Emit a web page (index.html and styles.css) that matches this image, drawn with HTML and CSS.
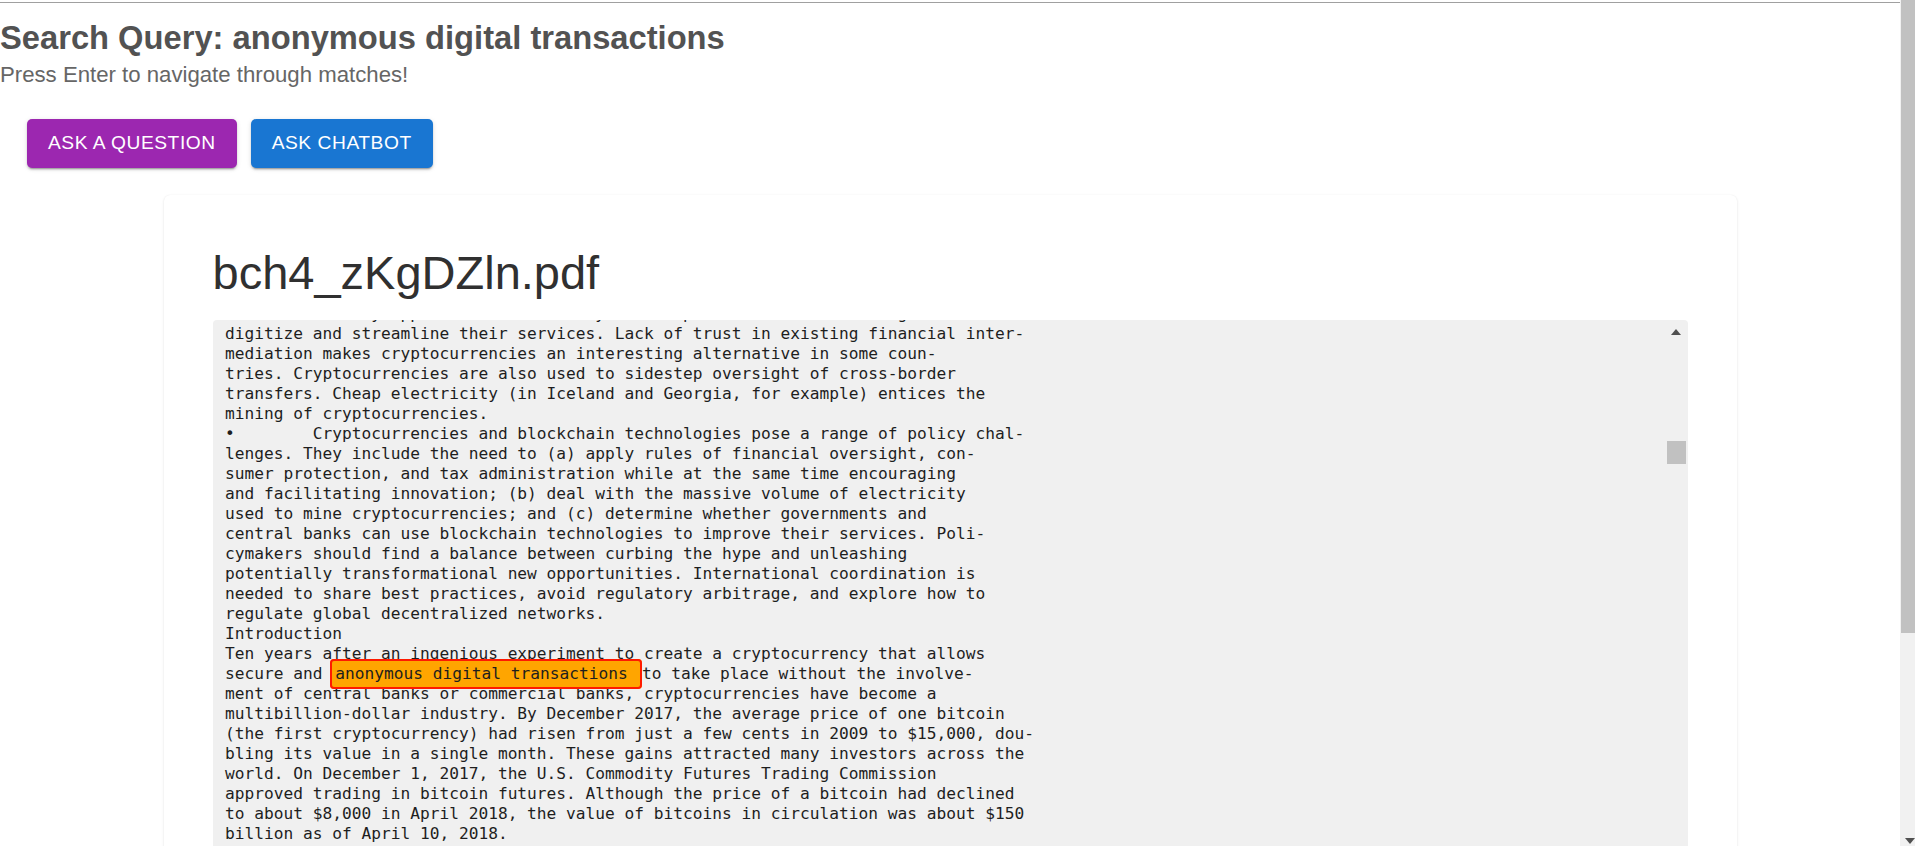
FILE: index.html
```html
<!DOCTYPE html>
<html lang="en">
<head>
<meta charset="utf-8">
<title>Search Query: anonymous digital transactions</title>
<link rel="stylesheet" href="styles.css">
</head>
<body>
<div class="page">
  <div class="topline"></div>
  <header class="query">
    <h1 class="query-title">Search Query: anonymous digital transactions</h1>
    <p class="query-hint">Press Enter to navigate through matches!</p>
  </header>
  <div class="actions">
    <button class="btn btn-secondary" type="button">Ask a question</button>
    <button class="btn btn-primary" type="button">Ask chatbot</button>
  </div>
  <section class="card">
    <h2 class="doc-title">bch4_zKgDZln.pdf</h2>
    <div class="viewer">
      <div class="viewer-body"><pre class="doc">As a result they approach this in a way that improves chances of using it to
digitize and streamline their services. Lack of trust in existing financial inter-
mediation makes cryptocurrencies an interesting alternative in some coun-
tries. Cryptocurrencies are also used to sidestep oversight of cross-border
transfers. Cheap electricity (in Iceland and Georgia, for example) entices the
mining of cryptocurrencies.
•        Cryptocurrencies and blockchain technologies pose a range of policy chal-
lenges. They include the need to (a) apply rules of financial oversight, con-
sumer protection, and tax administration while at the same time encouraging
and facilitating innovation; (b) deal with the massive volume of electricity
used to mine cryptocurrencies; and (c) determine whether governments and
central banks can use blockchain technologies to improve their services. Poli-
cymakers should find a balance between curbing the hype and unleashing
potentially transformational new opportunities. International coordination is
needed to share best practices, avoid regulatory arbitrage, and explore how to
regulate global decentralized networks.
Introduction
Ten years after an ingenious experiment to create a cryptocurrency that allows
secure and <span class="hl">anonymous digital transactions </span>to take place without the involve-
ment of central banks or commercial banks, cryptocurrencies have become a
multibillion-dollar industry. By December 2017, the average price of one bitcoin
(the first cryptocurrency) had risen from just a few cents in 2009 to $15,000, dou-
bling its value in a single month. These gains attracted many investors across the
world. On December 1, 2017, the U.S. Commodity Futures Trading Commission
approved trading in bitcoin futures. Although the price of a bitcoin had declined
to about $8,000 in April 2018, the value of bitcoins in circulation was about $150
billion as of April 10, 2018.
Cryptocurrencies have also attracted the attention of policymakers, who
are concerned about their use for illicit purposes and about the risks they
may pose to financial stability and consumer protection.</pre></div>
      <div class="viewer-scroll">
        <span class="arrow-up"></span>
        <span class="viewer-thumb"></span>
      </div>
    </div>
  </section>
</div>
<div class="page-scroll">
  <span class="page-thumb"></span>
  <span class="arrow-down"></span>
</div>
</body>
</html>
```

FILE: styles.css
```css
html, body {
  margin: 0;
  height: 100%;
  overflow: hidden;
  background: #ffffff;
}

body {
  display: flex;
  font-family: "Liberation Sans", Arial, sans-serif;
}

.page {
  flex: 1 1 auto;
  min-width: 0;
  overflow: hidden;
}

.topline {
  margin-top: 2px;
  border-top: 1px solid #a0a0a0;
}

.query-title {
  margin: 15.5px 0 0;
  font-size: 32.7px;
  line-height: 37px;
  font-weight: 700;
  color: #525252;
}

.query-hint {
  margin: 6px 0 0;
  font-size: 22.2px;
  line-height: 25px;
  color: #666666;
}

.actions {
  display: flex;
  gap: 14px;
  padding-left: 27px;
  margin-top: 32.4px;
}

.btn {
  display: inline-flex;
  align-items: center;
  height: 49px;
  padding: 0 21px;
  border: none;
  border-radius: 5px;
  color: #ffffff;
  font-family: "Liberation Sans", Arial, sans-serif;
  font-size: 19.2px;
  font-weight: 400;
  letter-spacing: 0.55px;
  text-transform: uppercase;
  box-shadow: 0 3px 1px -2px rgba(0, 0, 0, 0.2), 0 2px 2px 0 rgba(0, 0, 0, 0.14), 0 1px 5px 0 rgba(0, 0, 0, 0.12);
  cursor: pointer;
}

.btn-secondary {
  background: #9c27b0;
}

.btn-primary {
  background: #1976d2;
}

.card {
  box-sizing: border-box;
  width: 1573px;
  margin: 27.5px auto 40px;
  padding: 50.3px 49px 49px;
  background: #ffffff;
  border-radius: 6px;
  box-shadow: 0 1px 3px rgba(0, 0, 0, 0.1), 0 0 1px rgba(0, 0, 0, 0.06);
}

.doc-title {
  margin: 0 0 20.2px;
  font-size: 47px;
  line-height: 54px;
  font-weight: 400;
  color: #303030;
}

.viewer {
  display: flex;
  height: 640px;
  background: #f0f0f0;
  border-radius: 4px;
  overflow: hidden;
}

.viewer-body {
  flex: 1 1 auto;
  min-width: 0;
  overflow: hidden;
  padding-left: 12.5px;
}

.doc {
  margin: -16.3px 0 0;
  font-family: "DejaVu Sans Mono", "Liberation Mono", monospace;
  font-size: 16.2px;
  line-height: 20px;
  color: #1e1e1e;
  white-space: pre;
}

.hl {
  position: relative;
  margin-left: -2.4px;
  padding: 3px 2.6px 4.6px 3.5px;
  background: #ffa500;
  border: 2px solid #ff1a00;
  border-radius: 4px;
}

.viewer-scroll {
  flex: 0 0 23px;
  display: flex;
  flex-direction: column;
  align-items: center;
}

.arrow-up {
  margin-top: 9px;
  width: 0;
  height: 0;
  border-left: 5.5px solid transparent;
  border-right: 5.5px solid transparent;
  border-bottom: 6px solid #505050;
}

.viewer-thumb {
  margin-top: 106px;
  width: 19px;
  height: 23px;
  background: #c1c1c1;
}

.page-scroll {
  flex: 0 0 15px;
  display: flex;
  flex-direction: column;
  background: #f1f1f1;
}

.page-thumb {
  margin-left: 1px;
  height: 633px;
  background: #c1c1c1;
}

.arrow-down {
  margin: auto 0 2px 5px;
  width: 0;
  height: 0;
  border-left: 5px solid transparent;
  border-right: 5px solid transparent;
  border-top: 6px solid #505050;
}
```
